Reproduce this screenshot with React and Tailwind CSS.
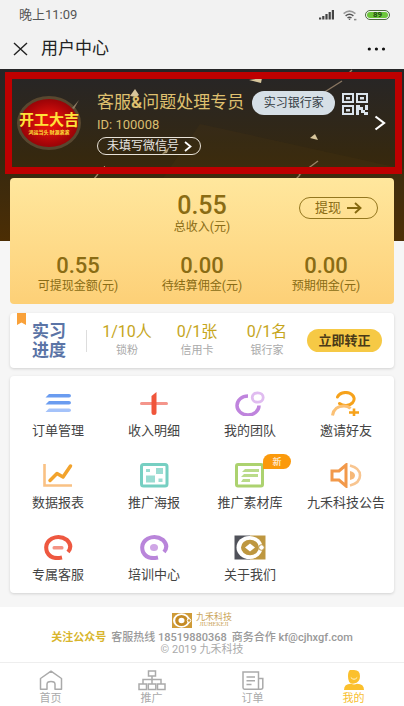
import React from "react";

const FONT = "font-[Roboto,'Noto_Sans_CJK_SC',sans-serif]";

function StatusBar() {
  return (
    <div className="flex h-[30px] items-center justify-between pr-[14px] pl-[19px] text-[13px] text-[#555]">
      <span>晚上11:09</span>
      <div className="flex items-center gap-2">
        <svg className="h-[10px] w-4" viewBox="0 0 16 10" fill="#444">
          <rect x="0" y="7.5" width="2.2" height="2" />
          <rect x="3.2" y="6" width="2.2" height="3.5" />
          <rect x="6.4" y="4" width="2.2" height="5.5" />
          <rect x="9.6" y="2" width="2.2" height="7.5" />
          <rect x="12.8" y="0" width="2.2" height="9.5" />
        </svg>
        <svg className="h-[11px] w-[14px]" viewBox="0 0 14 11" fill="none" stroke="#555" strokeWidth="1.5">
          <path d="M.6 3.6Q6.5-1.4 12.4 3.6" stroke="#999" />
          <path d="M2.6 5.8Q6.5 2.6 10.4 5.8" />
          <path d="M4.5 7.9Q6.5 6.4 8.5 7.9" />
          <circle cx="6.5" cy="9.3" r=".8" fill="#555" stroke="none" />
          <path d="M11 9.6h2.4" stroke="#888" />
        </svg>
        <div className="flex h-[10px] w-[25px] items-center justify-center rounded-full border border-[#4b6b3c] p-px">
          <span className="flex h-full w-full items-center justify-center rounded-full bg-[#6cc63a] text-[8px] font-bold text-[#244c12]">
            89
          </span>
        </div>
      </div>
    </div>
  );
}

function TitleBar() {
  return (
    <header className="flex h-[39px] items-center pr-[18px] pb-px pl-[13px] text-[#222]">
      <button aria-label="关闭">
        <svg className="h-[14px] w-[15px]" viewBox="0 0 15 14" fill="none" stroke="#222" strokeWidth="1.4">
          <path d="M1 1l13 12M14 1L1 13" />
        </svg>
      </button>
      <h1 className="ml-[13px] flex-1 text-[17px]">用户中心</h1>
      <button aria-label="更多">
        <svg className="h-1 w-[19px]" viewBox="0 0 19 4" fill="#111">
          <circle cx="2.3" cy="2" r="1.6" />
          <circle cx="9.4" cy="2" r="1.6" />
          <circle cx="16.5" cy="2" r="1.6" />
        </svg>
      </button>
    </header>
  );
}

function Confetti() {
  return (
    <svg className="pointer-events-none absolute top-0 left-0 h-[172px] w-[404px]" viewBox="0 0 404 172">
      <path d="M200 55L404 100V172H120z" fill="#5a3c10" opacity=".16" />
      <g fill="#d8c69c">
        <path d="M130 27l5-7 4 6-3 2z" />
        <path d="M249 11l13-2-1 5z" />
        <path d="M310 69l5-4 3 6z" />
        <path d="M162 85l8-8-3 7z" opacity=".7" />
        <path d="M102 99l3-2v2z" />
      </g>
      <g stroke="#9a8465" strokeWidth="1.4" fill="none">
        <path d="M352 1l-7 7" />
        <path d="M342 12l-19 12" stroke="#8a7762" />
        <path d="M318 92l-19 14" />
        <path d="M98 105l-4 5M300 106l-4 4" />
      </g>
    </svg>
  );
}

function Avatar() {
  return (
    <div className="relative flex h-[54px] w-16 shrink-0 flex-col items-center justify-center rounded-[50%] border-[3px] border-[#58472f] bg-[radial-gradient(ellipse_at_center,#e0120c_20%,#a80508_60%,#6d0405)] text-[#ffe23a]">
      <svg className="absolute -top-px -right-[2px] h-3 w-3" viewBox="0 0 12 12" fill="#8c7a62">
        <path d="M4 10L11 2l-5 9z" />
      </svg>
      <span className="text-[15px] leading-[18px] font-bold whitespace-nowrap">开工大吉</span>
      <span className="text-[5px] leading-[6px] font-bold whitespace-nowrap">鸿运当头 财源滚滚</span>
    </div>
  );
}

function QrIcon() {
  return (
    <svg className="h-[22px] w-[26px]" viewBox="0 0 26 22" preserveAspectRatio="none" fill="#dbe4ec">
      <path
        fillRule="evenodd"
        d="M0 0h12v10H0zM2 2v6h8V2zM14 0h12v10H14zM16 2v6h8V2zM0 12h12v10H0zM2 14v6h8v-6z"
      />
      <path d="M4 4h4v2.500h-4zM18 4h4v2.500h-4zM4 16h4v2.500h-4z" />
      <path d="M14 12h4v2h3v3h2v-5h3v5h-3v2h3v3h-4v-2h-3v-3h-2v5h-3z" />
    </svg>
  );
}

function Profile() {
  return (
    <section className="relative bg-linear-to-b from-[#262527] via-[#35280f] to-[#4c2e04] pt-[3px] pr-[2px] pb-[67px] pl-[5px]">
      <Confetti />
      <div className="relative flex h-[102px] items-center border-[7px] border-[#be0000] pr-[9px] pl-[5px]">
        <Avatar />
        <div className="ml-4 flex min-w-0 flex-1 flex-col items-start">
          <div className="flex h-6 items-center whitespace-nowrap">
            <h2 className="text-[17px] text-[#dfc06f]">
              客服<b>&amp;</b>问题处理专员
            </h2>
            <span className="ml-2 flex h-6 w-[83px] items-center justify-center rounded-full bg-[#d6dfe6] text-xs text-[#333b42]">
              实习银行家
            </span>
          </div>
          <p className="mt-[2px] text-[13px] leading-4 text-[#d9bd70]">ID: 100008</p>
          <button className="mt-1 flex h-[18px] w-[104px] items-center justify-between rounded-full border border-[#e8e2d8] pr-2 pl-[9px] text-xs text-[#e8e6e2]">
            未填写微信号
            <svg className="h-[11px] w-2" viewBox="0 0 8 11" fill="none" stroke="#fff" strokeWidth="1.8">
              <path d="M1 1l5.500 4.500L1 10" />
            </svg>
          </button>
        </div>
        <button className="mb-[38px]" aria-label="二维码">
          <QrIcon />
        </button>
        <button className="ml-[6px]" aria-label="个人资料">
          <svg className="h-4 w-3" viewBox="0 0 12 16" fill="none" stroke="#fff" strokeWidth="2.200">
            <path d="M1.500 1.500l8.500 6.500-8.500 6.500" />
          </svg>
        </button>
      </div>
    </section>
  );
}

const balances = [
  ["0.55", "可提现金额(元)"],
  ["0.00", "待结算佣金(元)"],
  ["0.00", "预期佣金(元)"],
];

function BalanceCard() {
  return (
    <section className="relative mx-[10px] -mt-[63px] rounded bg-linear-to-b from-[#ffe79d] to-[#fdd077] px-[6px] pt-4 pb-[9px] text-center text-[#8a6c14]">
      <p className="text-[25px] leading-6 font-medium">0.55</p>
      <p className="text-xs leading-[18px]">总收入(元)</p>
      <button className="absolute top-[19px] right-4 flex h-[22px] w-[79px] items-center justify-center gap-[6px] rounded-full border border-[#94771f] text-[13px]">
        提现
        <svg className="h-3 w-[15px]" viewBox="0 0 15 12" fill="none" stroke="#86690f" strokeWidth="1.900">
          <path d="M0 6h13.500M8 1l5.500 5L8 11" />
        </svg>
      </button>
      <div className="mt-[19px] grid grid-cols-3">
        {balances.map(([amount, label]) => (
          <div key={label}>
            <p className="text-[22px] leading-[22px] font-medium">{amount}</p>
            <p className="text-xs leading-[18px]">{label}</p>
          </div>
        ))}
      </div>
    </section>
  );
}

const progress = [
  ["1/10人", "锁粉"],
  ["0/1张", "信用卡"],
  ["0/1名", "银行家"],
];

function ProgressCard() {
  return (
    <section className="relative mx-[10px] mt-[9px] flex h-[55px] items-center rounded bg-white pr-3 pl-[22px] shadow-[0_1px_3px_rgba(0,0,0,0.15)]">
      <svg className="absolute top-0 left-[7px] h-3 w-[9px]" viewBox="0 0 9 12" fill="#f9a13a">
        <path d="M0 0h9v12L4.500 9.500 0 12z" />
      </svg>
      <h2 className="text-[17px] leading-[19px] font-bold text-[#5b74a6]">
        实习
        <br />
        进度
      </h2>
      <div className="ml-5 h-[22px] w-px bg-[#ddd]" />
      <div className="ml-[5px] grid flex-1 grid-cols-3 text-center">
        {progress.map(([value, label]) => (
          <div key={label}>
            <p className="text-base leading-5 text-[#c6a61c]">{value}</p>
            <p className="text-[11px] leading-[18px] text-[#aaa]">{label}</p>
          </div>
        ))}
      </div>
      <button className="ml-[5px] h-[23px] w-[75px] rounded-full bg-[#f6c945] text-[13px] leading-[23px] font-bold text-[#4a3a18]">
        立即转正
      </button>
    </section>
  );
}

const icons = {
  orders: (
    <g>
      <path d="M7 3h20q2 0 2 1.700t-2 1.700H3.500z" fill="#6a9cf0" />
      <path d="M7 10h20q2 0 2 1.700t-2 1.700H3.500z" fill="#6a9cf0" />
      <path d="M7 17.500h20q2 0 2 1.700t-2 1.700H3.500z" fill="#a5c3fa" />
    </g>
  ),
  income: (
    <g>
      <rect x="2" y="11" width="28" height="3" rx="1.500" fill="#f4958b" />
      <path d="M13.500 5l5-4v21q0 2-2.500 2t-2.500-2z" fill="#f0553a" />
    </g>
  ),
  team: (
    <g fill="none">
      <path d="M14 5A11 9.500 0 1 0 25 14.500" stroke="#bf84dd" strokeWidth="3.500" />
      <ellipse cx="23.700" cy="6.500" rx="5.500" ry="4.700" stroke="#e0bcf0" strokeWidth="2.800" />
    </g>
  ),
  invite: (
    <g fill="none" strokeWidth="3">
      <path d="M7.500 6A8.500 6.500 0 1 1 9.500 12.500" stroke="#f6a21b" strokeLinecap="round" />
      <path d="M2.500 24.500Q4 15 14 15Q18 15 20.500 17.500" stroke="#fbc175" />
      <path d="M24 17.500v8M19 21.500h10" stroke="#f6a21b" strokeWidth="2.600" />
    </g>
  ),
  report: (
    <g fill="none">
      <path d="M2.500 1v21.500H30" stroke="#f9c184" strokeWidth="2.600" />
      <path d="M8 17.500l7-7 6 3.500 7.500-11" stroke="#f2a32d" strokeWidth="3.500" strokeLinecap="round" strokeLinejoin="round" />
    </g>
  ),
  poster: (
    <g>
      <rect x="3.500" y="1.500" width="25.500" height="21.500" rx="2" fill="none" stroke="#76cfc2" strokeWidth="3" />
      <g fill="#9bdcd2">
        <rect x="8" y="6" width="4" height="3" />
        <rect x="18" y="5" width="7" height="6" />
        <rect x="8" y="12.500" width="9" height="7" />
        <rect x="20.500" y="15.500" width="4" height="3.500" />
      </g>
    </g>
  ),
  material: (
    <g>
      <rect x="2.500" y="1.500" width="26" height="21.500" rx="1.500" fill="none" stroke="#acd26f" strokeWidth="3" />
      <g fill="#badb8a">
        <path d="M11 6h14v3H8z" />
        <path d="M10 11h14v3H7z" />
        <path d="M9 16h7v3H7z" />
      </g>
    </g>
  ),
  notice: (
    <g fill="none">
      <path d="M2 8h7l7-6v21l-7-6H2z" stroke="#f2994a" strokeWidth="3" />
      <path d="M20 2.500Q30 5 30 12.500T20 22.500" stroke="#f8c590" strokeWidth="2.600" />
      <path d="M20 8q5 1 5 4.500T20 17z" fill="#f6b878" />
    </g>
  ),
  service: (
    <g>
      <path d="M20 22.500Q9 25 5 17Q2 8 10 3.500Q18 0 25 5Q31 11 26 17" fill="none" stroke="#ee5840" strokeWidth="4" />
      <rect x="10.500" y="11" width="11" height="3.500" rx="1.500" fill="#f49384" />
    </g>
  ),
  training: (
    <g>
      <path d="M20 22.500Q9 25 5 17Q2 8 10 3.500Q18 0 25 5Q31 11 26 17" fill="none" stroke="#b985da" strokeWidth="4" />
      <ellipse cx="16" cy="12.500" rx="4" ry="3.500" fill="#cfa6e6" />
    </g>
  ),
  about: (
    <g>
      <path d="M.5 .5H16v24H.5z" fill="#50525a" />
      <path d="M16 .5h15.500v24H16z" fill="#be9740" />
      <ellipse cx="15.500" cy="12.500" rx="13" ry="11.500" fill="#fff" />
      <path fillRule="evenodd" d="M16 4.800A9 7.700 0 1 0 16 20.200A9 7.700 0 1 0 16 4.800zM16 8.500l5 4-5 4-5-4z" fill="#be9740" />
      <circle cx="27.500" cy="12.500" r="2.800" fill="#fff" stroke="#be9740" strokeWidth="1" />
    </g>
  ),
};

const menu = [
  ["orders", "订单管理"],
  ["income", "收入明细"],
  ["team", "我的团队"],
  ["invite", "邀请好友"],
  ["report", "数据报表"],
  ["poster", "推广海报"],
  ["material", "推广素材库", "新"],
  ["notice", "九禾科技公告"],
  ["service", "专属客服"],
  ["training", "培训中心"],
  ["about", "关于我们"],
];

function MenuCard() {
  return (
    <section className="mx-[10px] mt-2 grid grid-cols-4 gap-y-[22px] rounded bg-white pt-[15px] pb-2 shadow-[0_1px_3px_rgba(0,0,0,0.15)]">
      {menu.map(([icon, label, badge]) => (
        <button key={icon} className="relative flex flex-col items-center text-[13px] leading-5 whitespace-nowrap text-[#444]">
          <svg className="mb-[5px] h-[25px] w-8" viewBox="0 0 32 25">
            {icons[icon]}
          </svg>
          {badge && (
            <span className="absolute -top-[9px] left-[61px] flex h-[15px] w-7 items-center justify-center rounded-[8px_8px_8px_0] bg-[#fb9a0c] text-[9px] text-white">
              {badge}
            </span>
          )}
          {label}
        </button>
      ))}
    </section>
  );
}

function Footer() {
  return (
    <footer className="mt-[14px] flex flex-1 flex-col items-center bg-white pt-[5px] pb-[6px] text-[11px] leading-3 whitespace-nowrap text-[#aaa]">
      <div className="flex h-4 items-center gap-1">
        <svg className="h-[15px] w-5" viewBox="0 0 20 15">
          <path d="M0 0h20v15H0z" fill="#cf9b38" />
          <ellipse cx="9.500" cy="7.500" rx="8.500" ry="7.200" fill="#fff" />
          <path fillRule="evenodd" d="M9.500 2A6.300 5.500 0 1 0 9.500 13A6.300 5.500 0 1 0 9.500 2zM9.500 4.800a3 2.700 0 1 1 0 5.400a3 2.700 0 1 1 0-5.400z" fill="#c58b25" />
          <circle cx="17" cy="7.500" r="1.800" fill="#cf9b38" stroke="#fff" />
        </svg>
        <div className="text-center font-['Liberation_Serif','Noto_Sans_CJK_SC',serif] text-[#cba55a]">
          <p className="text-[9px] leading-[9px]">九禾科技</p>
          <p className="text-[6px] leading-[5px]">JIUHEKEJI</p>
        </div>
      </div>
      <p className="mt-1 flex gap-[5px] font-medium text-[#999]">
        <a href="#follow" className="font-bold text-[#d8b52c]">关注公众号</a>
        <span>客服热线 18519880368</span>
        <span>商务合作 kf@cjhxgf.com</span>
      </p>
      <p>© 2019 九禾科技</p>
    </footer>
  );
}

const tabs = [
  [
    "首页",
    <g key="home" fill="none" stroke="#aaa" strokeWidth="1.500">
      <path d="M3.500 8.500L14 1.200l10.500 7.300v10.700H18v-5q0-2.700-4-2.700t-4 2.700v5H3.500z" strokeLinejoin="round" />
    </g>,
  ],
  [
    "推广",
    <g key="tree" fill="none" stroke="#aaa" strokeWidth="1.500">
      <rect x="10.500" y="1" width="7" height="5" />
      <path d="M14 6v8M5 14v-4.500h18V14" />
      <rect x="1" y="14" width="7.500" height="5.500" />
      <rect x="10.300" y="14" width="7.500" height="5.500" />
      <rect x="19.500" y="14" width="7.500" height="5.500" />
    </g>,
  ],
  [
    "订单",
    <g key="paper" fill="none" stroke="#aaa" strokeWidth="1.500">
      <path d="M4 2h15.500v17.200H5.500Q4 19.200 4 17.500zM19.500 8.500h4.300v9q0 1.700-2 1.700h-3M7.500 7h8.500M7.500 10.700h8.500M7.500 14.400h5" />
    </g>,
  ],
  [
    "我的",
    <g key="me" fill="#fbc02d">
      <path d="M14 0q6 0 6 6.200T14 13.500 8 6.200 14 0zM4 20q0-6.200 7-6.200 3 1.500 6 0 7 0 7 6.200z" />
      <path d="M10.800 7.500q3.200 3.500 6.400 0" fill="none" stroke="#fff4cf" />
    </g>,
  ],
];

function TabBar() {
  return (
    <nav className="grid h-11 grid-cols-4 border-t border-[#eee] bg-white">
      {tabs.map(([label, icon], i) => (
        <a
          key={label}
          href={"#tab" + i}
          className={
            "flex flex-col items-center pt-[7px] text-[11px] leading-[16px] " +
            (label === "我的" ? "text-[#f8c030]" : "text-[#aaa]")
          }
        >
          <svg className="h-[21px] w-7 shrink-0" viewBox="0 0 28 21">
            {icon}
          </svg>
          {label}
        </a>
      ))}
    </nav>
  );
}

export default function App() {
  return (
    <div className={"flex min-h-screen flex-col bg-[#f6f6f6] " + FONT}>
      <div className="bg-[#f2f2f2]">
        <StatusBar />
        <TitleBar />
      </div>
      <Profile />
      <BalanceCard />
      <ProgressCard />
      <MenuCard />
      <Footer />
      <TabBar />
    </div>
  );
}
